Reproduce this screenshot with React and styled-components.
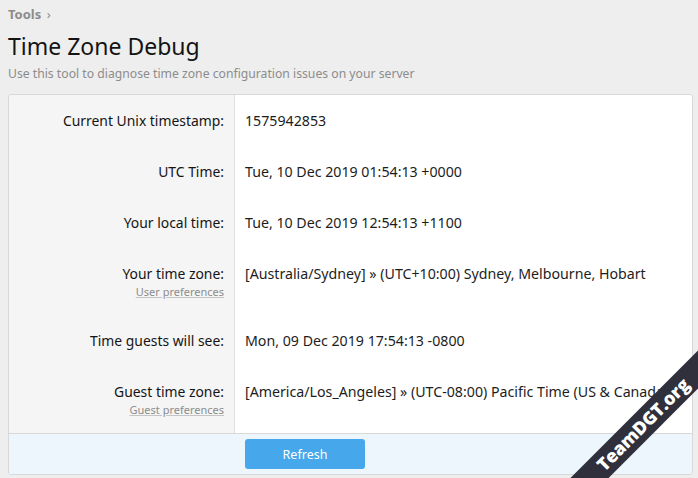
import React from "react";
import styled, { createGlobalStyle } from "styled-components";

const GlobalStyle = createGlobalStyle`
  html, body {
    margin: 0;
    padding: 0;
    overflow: hidden;
  }
  body {
    background: #eeeeee;
    font-family: "Noto Sans", "Open Sans", "DejaVu Sans", sans-serif;
    color: #141414;
  }
`;

const rows = [
  { label: "Current Unix timestamp:", value: "1575942853" },
  { label: "UTC Time:", value: "Tue, 10 Dec 2019 01:54:13 +0000" },
  { label: "Your local time:", value: "Tue, 10 Dec 2019 12:54:13 +1100" },
  {
    label: "Your time zone:",
    hint: "User preferences",
    value: "[Australia/Sydney] » (UTC+10:00) Sydney, Melbourne, Hobart",
  },
  { label: "Time guests will see:", value: "Mon, 09 Dec 2019 17:54:13 -0800" },
  {
    label: "Guest time zone:",
    hint: "Guest preferences",
    value: "[America/Los_Angeles] » (UTC-08:00) Pacific Time (US & Canada)",
  },
];

const App = () => {
  return (
    <Page>
      <GlobalStyle />
      <Breadcrumb>
        Tools <Chevron>›</Chevron>
      </Breadcrumb>
      <Title>Time Zone Debug</Title>
      <Description>
        Use this tool to diagnose time zone configuration issues on your server
      </Description>

      <Block>
        {rows.map((row) => (
          <FormRow key={row.label}>
            <Label>
              <LabelText>{row.label}</LabelText>
              {row.hint && <Hint href="#">{row.hint}</Hint>}
            </Label>
            <Value>{row.value}</Value>
          </FormRow>
        ))}
        <Footer>
          <Spacer />
          <Actions>
            <Button type="button">Refresh</Button>
          </Actions>
        </Footer>
      </Block>

      <Ribbon>
        <RibbonText>TeamDGT.org</RibbonText>
      </Ribbon>
    </Page>
  );
};

const Page = styled.div`
  position: relative;
  width: 698px;
  height: 478px;
  overflow: hidden;
`;

const Breadcrumb = styled.div`
  padding: 6px 8px 0;
  font-size: 13px;
  line-height: 16px;
  font-weight: 700;
  color: #8c8c8c;
`;

const Chevron = styled.span`
  font-weight: 400;
  margin-left: 2px;
`;

const Title = styled.h1`
  margin: 9px 8px 0;
  font-size: 23px;
  line-height: 30px;
  font-weight: 400;
  color: #141414;
`;

const Description = styled.div`
  margin: 4px 8px 0;
  font-size: 12.2px;
  line-height: 18px;
  color: #8c8c8c;
`;

const Block = styled.div`
  margin: 11px 5px 0 8px;
  border: 1px solid #d8d8d8;
  border-radius: 3px;
  background: #fff;
  overflow: hidden;
`;

const FormRow = styled.div`
  display: grid;
  grid-template-columns: 226px 1fr;
`;

const Label = styled.div`
  display: flex;
  flex-direction: column;
  align-items: flex-end;
  padding: 15px 10px;
  background: #f5f5f5;
  border-right: 1px solid #dfdfdf;
`;

const LabelText = styled.span`
  font-size: 13.9px;
  line-height: 21px;
`;

const Hint = styled.a`
  font-size: 11px;
  line-height: 16px;
  color: #8c8c8c;
  text-decoration: underline;
  text-decoration-color: #c4c4c4;
`;

const Value = styled.div`
  padding: 15px 10px;
  font-size: 14.2px;
  line-height: 21px;
  color: #1d1d1d;
  white-space: nowrap;
  overflow: hidden;
`;

const Footer = styled.div`
  display: grid;
  grid-template-columns: 226px 1fr;
  border-top: 1px solid #d8d8d8;
  background: #edf6fd;
`;

const Spacer = styled.div``;

const Actions = styled.div`
  padding: 5px 10px 5px 10px;
`;

const Button = styled.button`
  width: 120px;
  height: 30px;
  border: none;
  border-radius: 3px;
  background: #47a7eb;
  color: #fff;
  font-family: inherit;
  font-size: 12.5px;
  cursor: pointer;
`;

const Ribbon = styled.div`
  position: absolute;
  left: 523px;
  top: 411px;
  width: 240px;
  height: 27px;
  display: flex;
  align-items: center;
  justify-content: center;
  background: #30303c;
  transform: rotate(-45deg);
`;

const RibbonText = styled.span`
  color: #fff;
  font-family: "Open Sans", "Noto Sans", sans-serif;
  font-weight: 800;
  font-size: 18px;
  line-height: 27px;
  letter-spacing: -0.2px;
`;

export default App;
